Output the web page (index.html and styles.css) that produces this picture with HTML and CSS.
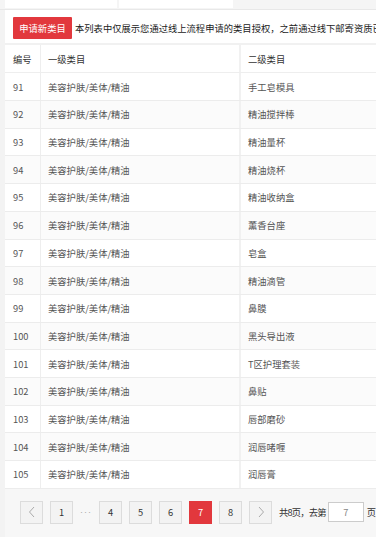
FILE: index.html
```html
<!DOCTYPE html>
<html lang="zh-CN">
<head>
<meta charset="utf-8">
<title>类目授权</title>
<link rel="stylesheet" href="styles.css">
</head>
<body>
<div class="tabs">
  <div class="tab tab-a"></div>
  <div class="tab tab-b"></div>
</div>
<div class="main">
  <div class="toolbar">
    <button class="btn-apply">申请新类目</button>
    <span class="notice">本列表中仅展示您通过线上流程申请的类目授权，之前通过线下邮寄资质已申请的类目授权请联系客服查询</span>
  </div>
  <div class="table">
    <div class="row head"><div class="c c1">编号</div><div class="c c2">一级类目</div><div class="c c3">二级类目</div></div>
    <div class="row"><div class="c c1">91</div><div class="c c2">美容护肤/美体/精油</div><div class="c c3">手工皂模具</div></div>
    <div class="row alt"><div class="c c1">92</div><div class="c c2">美容护肤/美体/精油</div><div class="c c3">精油搅拌棒</div></div>
    <div class="row"><div class="c c1">93</div><div class="c c2">美容护肤/美体/精油</div><div class="c c3">精油量杯</div></div>
    <div class="row alt"><div class="c c1">94</div><div class="c c2">美容护肤/美体/精油</div><div class="c c3">精油烧杯</div></div>
    <div class="row"><div class="c c1">95</div><div class="c c2">美容护肤/美体/精油</div><div class="c c3">精油收纳盒</div></div>
    <div class="row alt"><div class="c c1">96</div><div class="c c2">美容护肤/美体/精油</div><div class="c c3">薰香台座</div></div>
    <div class="row"><div class="c c1">97</div><div class="c c2">美容护肤/美体/精油</div><div class="c c3">皂盒</div></div>
    <div class="row alt"><div class="c c1">98</div><div class="c c2">美容护肤/美体/精油</div><div class="c c3">精油滴管</div></div>
    <div class="row"><div class="c c1">99</div><div class="c c2">美容护肤/美体/精油</div><div class="c c3">鼻膜</div></div>
    <div class="row alt"><div class="c c1">100</div><div class="c c2">美容护肤/美体/精油</div><div class="c c3">黑头导出液</div></div>
    <div class="row"><div class="c c1">101</div><div class="c c2">美容护肤/美体/精油</div><div class="c c3">T区护理套装</div></div>
    <div class="row alt"><div class="c c1">102</div><div class="c c2">美容护肤/美体/精油</div><div class="c c3">鼻贴</div></div>
    <div class="row"><div class="c c1">103</div><div class="c c2">美容护肤/美体/精油</div><div class="c c3">唇部磨砂</div></div>
    <div class="row alt"><div class="c c1">104</div><div class="c c2">美容护肤/美体/精油</div><div class="c c3">润唇啫喱</div></div>
    <div class="row"><div class="c c1">105</div><div class="c c2">美容护肤/美体/精油</div><div class="c c3">润唇膏</div></div>
  </div>
  <div class="pager">
    <span class="pg arrow"><svg width="8" height="12" viewBox="0 0 8 12"><polyline points="6,1 1.5,6 6,11" fill="none" stroke="#aaa" stroke-width="1"/></svg></span>
    <span class="pg">1</span>
    <span class="dots">···</span>
    <span class="pg">4</span>
    <span class="pg">5</span>
    <span class="pg">6</span>
    <span class="pg active">7</span>
    <span class="pg">8</span>
    <span class="pg arrow"><svg width="8" height="12" viewBox="0 0 8 12"><polyline points="2,1 6.5,6 2,11" fill="none" stroke="#aaa" stroke-width="1"/></svg></span>
    <span class="total">共8页，去第</span>
    <span class="goto">7</span>
    <span class="unit">页</span>
  </div>
</div>
</body>
</html>
```
FILE: styles.css
```css
* { box-sizing: border-box; }
html, body {
  margin: 0;
  padding: 0;
  height: 100%;
  overflow: hidden;
}
body {
  background: #f3f3f3;
  font-family: "Noto Sans CJK SC", "Microsoft YaHei", sans-serif;
  font-size: 9.3px;
  color: #555;
  width: 376px;
}
.tabs {
  height: 10px;
  display: flex;
  gap: 2px;
  padding-left: 5px;
  background: #f5f5f5;
  border-bottom: 1px solid #e8e8e8;
}
.tab {
  height: 8px;
  background: #fff;
}
.tab-a { width: 112px; }
.tab-b { width: 114px; }
.main {
  margin-left: 5px;
  width: 420px;
  background: #fff;
}
.toolbar {
  display: flex;
  align-items: center;
  gap: 3px;
  padding: 7px 0 4px 8px;
  white-space: nowrap;
  overflow: hidden;
}
.btn-apply {
  flex-shrink: 0;
  font-family: inherit;
  font-size: 9.3px;
  color: #fff;
  background: #e2383d;
  border: none;
  height: 22px;
  width: 59px;
  padding: 0;
  border-radius: 1px;
}
.notice {
  color: #222;
  font-size: 9.3px;
}
.table {
  border-top: 2px solid #f1f1f1;
}
.row {
  display: flex;
  height: 27.71px;
  border-bottom: 1px solid #ececec;
  background: #fff;
}
.row.alt { background: #fbfbfb; }
.row.head {
  height: 28.3px;
  color: #333;
  border-bottom: 1px solid #eee;
}
.c {
  display: flex;
  align-items: center;
  white-space: nowrap;
}
.c1 {
  width: 36px;
  padding-left: 8px;
  border-right: 1px solid #eee;
}
.c2 {
  width: 200px;
  padding-left: 7px;
  border-right: 2px solid #f1f1f1;
}
.c3 {
  flex: 1;
  padding-left: 7px;
}
.pager {
  background: #f7f7f7;
  display: flex;
  align-items: center;
  gap: 7px;
  padding: 12px 0 14px 15px;
  color: #333;
}
.pg {
  flex-shrink: 0;
  width: 23px;
  height: 23px;
  border: 1px solid #dcdcdc;
  background: #f3f3f3;
  display: flex;
  align-items: center;
  justify-content: center;
}
.pg.active {
  background: #e2383d;
  border-color: #e2383d;
  color: #fff;
}
.dots {
  flex-shrink: 0;
  width: 12px;
  color: #aaa;
  font-family: "Liberation Sans", sans-serif;
  font-size: 9px;
  text-align: center;
  letter-spacing: 1px;
  white-space: nowrap;
}
.total {
  flex-shrink: 0;
  letter-spacing: -0.8px;
}
.goto {
  flex-shrink: 0;
  margin-left: -5px;
  width: 36px;
  height: 20px;
  border: 1px solid #ccc;
  background: #fff;
  display: flex;
  align-items: center;
  justify-content: center;
  color: #888;
}
.unit {
  flex-shrink: 0;
  margin-left: -4px;
}
```
